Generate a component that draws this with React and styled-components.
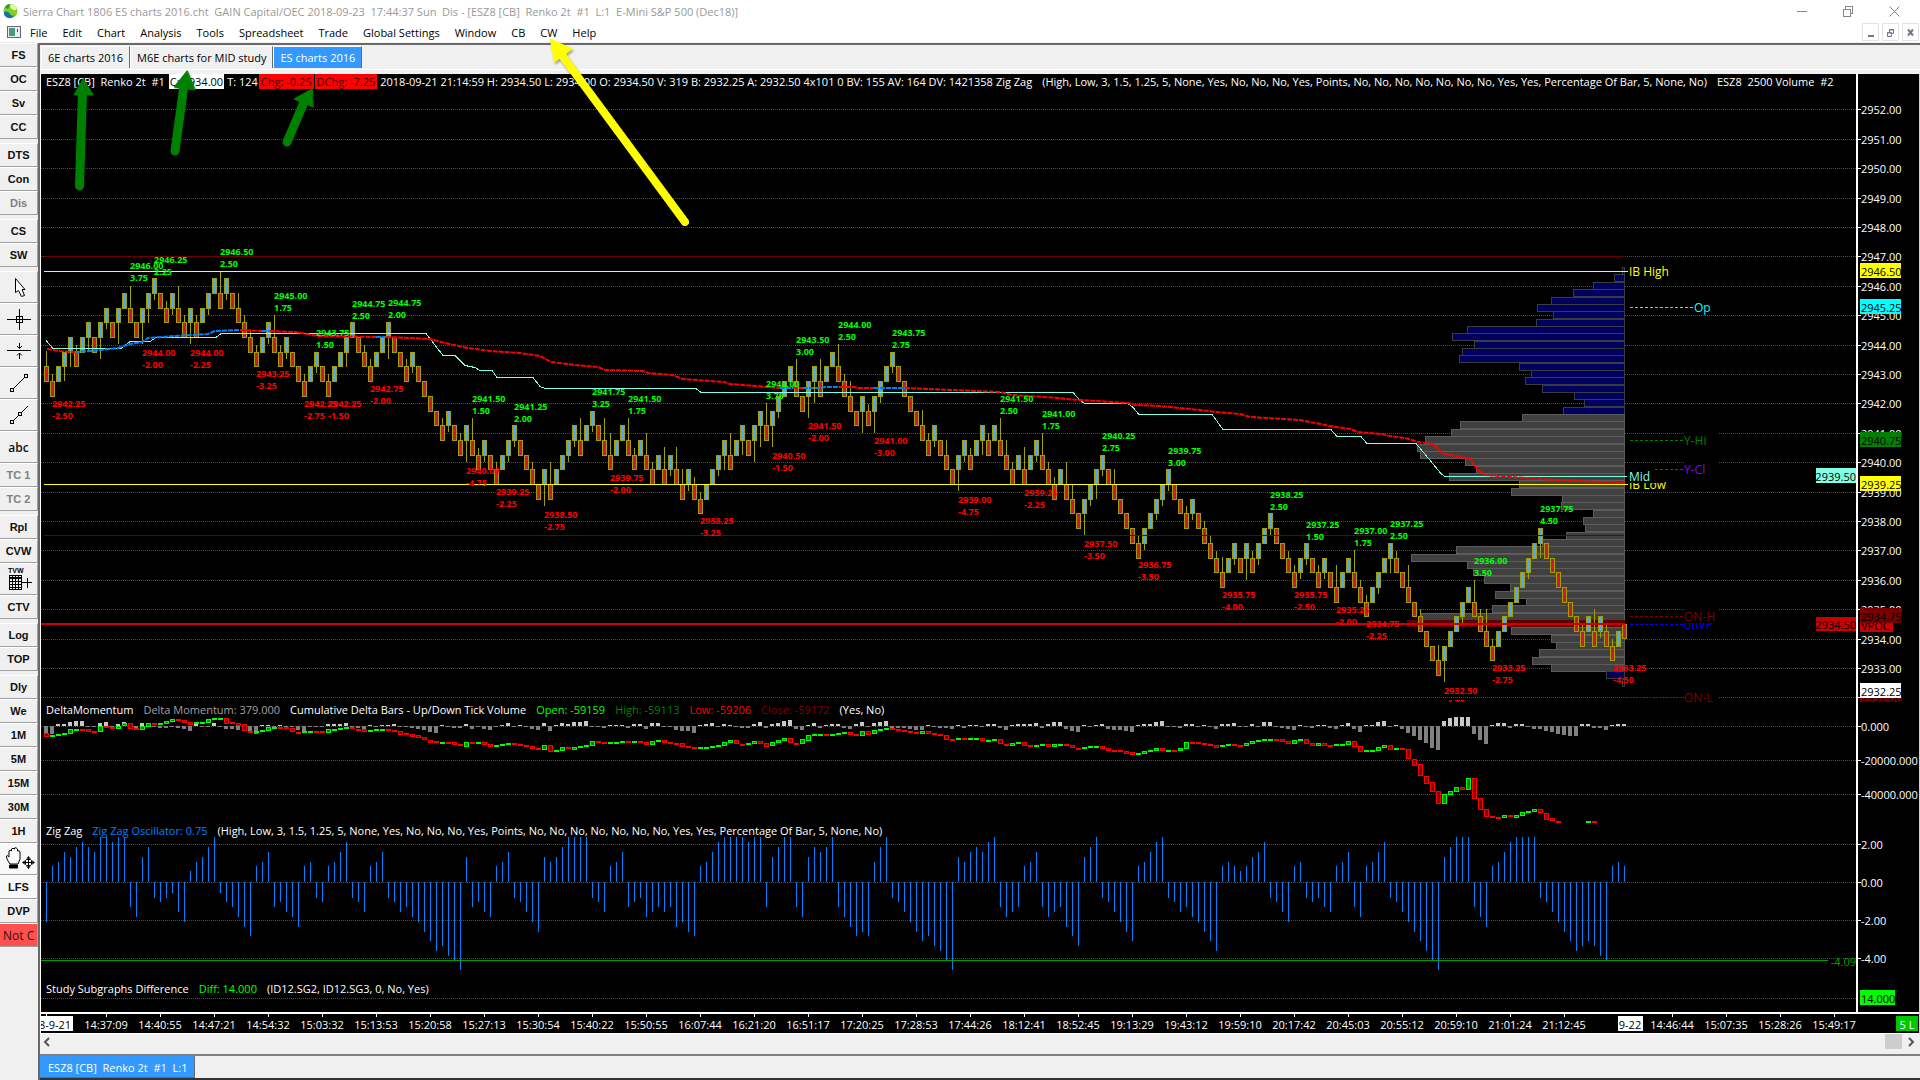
import React, { useState } from "react";
import styled, { createGlobalStyle } from "styled-components";

const GlobalStyle = createGlobalStyle`
  * {
    box-sizing: border-box;
  }
  body {
    margin: 0;
    background: #f0f0f0;
    font-family: "Open Sans", "Noto Sans", sans-serif;
    font-size: 11px;
    overflow: hidden;
  }
  button {
    font-family: inherit;
    font-size: inherit;
    padding: 0;
    margin: 0;
    border: 0;
    background: none;
  }
`;

/* ---------- data ---------- */

// one entry per bar: u = up brick, d = down brick, number = wick length in ticks
const BARS =
  "d2d1u0u2u2d1u0u2d0u3u1d0u3u0d3d0u3u2u1d0d1u1d3d1u3d1u0u1u0d3u1d0d2d1d1d1u0u1d3d1" +
  "u1d0d0d1u0u1d0d1u0u0u2u0d0d1d1u0u0u3d0d0d1u1d0d0d0d0d1u1d0d1u3d3d1u1d0d1u0u1u1d0" +
  "d0d1d0u3d3u0u0u1u1d3u0u1d0d3d3u0u0d3d1u0d3d1u0d3u1d3d2u1d1d1u0u0u1u2d3u0u2d0u3u3" +
  "d3u3u1u0u0d3d0u3u3d3u0u0d3d1d2d0u3d1u3u1u0u1d0d0d0d0d2d1u1d0d2d0u3u1d1u0u2d1u0d3" +
  "d2d1u0d3u0u1d3d1d1u0d3d2d0u3u1u2u1d0d2d0d0d0d1u1u0u1u1u1d0d0d1u1d0d1d1d1d2u0u1d0" +
  "u3d1u1u0u1d0d0d1d1u1u1d0d1u1d0d3u0u0d3d1d1u0u1u0u2d1d0d3d0d1d0d0d2u3u0u0u1u0d3d1" +
  "d3d1u0u0u0u0u0u1u0u2d0d0d0d0d0d0d1u0d3u1d1d1u0d0";

// zig zag oscillator, quarter points
const OSCILLATOR = [
  -8, 3, 4, 6, 5, 7, 8, 7, 6, 9, 9, 8, 9, 9, -5, -7, 5, 7, -3, -4, -3, -2, -6, -8, 2, 4, 5, 7, 9, -2,
  -4, -5, -7, -9, -11, 3, 4, 6, -5, -4, -6, -7, -9, 3, 4, -3, -4, 3, 4, 6, 8, -3, -4, -6, 3, 4, 6, -3,
  -4, -6, -5, -7, -8, -10, -12, -14, -13, -15, -16, -18, 5, -5, -4, -6, -7, 3, 4, 6, -3, -4, -6, -8,
  -10, 5, 4, 5, 7, 9, 9, 9, 9, -3, -4, -6, 3, 4, 6, -5, -4, -3, -7, -6, -5, -6, -5, -9, -8, -10, -11, 3,
  4, 6, 8, 9, 9, 9, 9, 8, 9, 9, -5, 5, 7, 9, 9, -5, -7, 5, 7, 6, 7, 9, -5, -7, -9, -11, -10, -11, 4, 7,
  9, -3, -4, -6, -8, -10, -12, -11, -13, -14, -16, -18, 5, 4, 6, 7, 6, 8, 9, -5, -7, -6, -5, 3, 4, 6,
  -5, -7, -6, -5, -9, -11, -13, 5, 7, 9, -3, -4, -6, -8, -10, -12, 3, 4, 6, 8, 9, -3, -4, -6, -5, -7,
  -8, -10, -12, -14, 3, 4, 3, 2, 3, 5, 6, 8, -3, -4, -6, -8, 3, 4, -3, -4, -3, -5, -6, 3, 4, 6, -5, -7,
  3, 4, 6, 8, -3, -4, -6, -8, -10, -12, -14, -16, -18, 5, 7, 9, 9, 9, -5, -7, -9, 3, 4, 6, 8, 9, 9, 9,
  9, -3, -4, -6, -8, -10, -12, -14, -13, -12, -13, -15, -16, 3, 4, 3,
];

const MOMENTUM = [
  -8, -8, 2, 2, 4, 5, 5, -1, -1, 3, 4, -1, 2, 4, -2, -4, 3, 3, -1, -2, -2, -1, -2, -3, -5, 2, -1, -1, 3,
  -1, -3, -3, -4, -5, -7, -8, 1, 1, -1, 1, -1, -1, -4, -5, -1, -1, -1, 2, 2, 2, 3, -2, -2, -3, 1, -1, 1,
  1, 2, -1, -1, -2, -3, -4, -6, -7, 1, -1, -2, -2, 2, -3, -1, -3, -4, -1, 1, 3, -1, 1, -1, -3, -4, 3,
  -5, 1, 3, 2, 4, 4, 5, -1, -1, -2, 1, 1, 1, -2, 2, 2, -3, 3, 3, -1, -1, -4, -5, -5, -7, 1, 2, 3, -1, 2,
  1, -1, -2, -2, 2, 4, -2, 2, 3, 5, 6, -3, -4, 1, 3, -2, 1, 2, 2, -2, -3, 2, 4, -1, 3, 4, 5, -2, -2, -2,
  -3, -4, -4, 1, -1, -2, -2, -3, 1, -2, 1, 1, -1, 2, 2, -2, -4, 1, 2, 2, 2, 3, -2, 2, 4, 4, -3, -5, -6,
  1, -1, 1, 2, -3, -4, -4, -5, -6, 1, 2, 2, 4, 5, -1, -1, -2, 2, 2, -1, 1, -1, -3, 2, 2, 3, -1, -1, 2,
  -1, 4, 4, -1, -2, -3, -4, 1, -1, -2, 1, 1, -2, -3, 1, 3, -3, -6, 1, 1, 4, 5, -1, 1, -3, -7, -10, -14,
  -17, -22, -24, 5, 8, 9, 9, 9, -8, -14, -18, 1, 3, 3, -2, 2, 2, -1, -3, -3, -5, -6, -8, -9, -10, -10, 2,
  2, -2, -2, -4, 1, 2, 2,
];

// closes of the cumulative delta bars, thirds of a pixel below the top of the scale
const DELTA = [
  112, 109, 105, 102, 90, 89, 91, 97, 98, 82, 84, 85, 80, 73, 88, 92, 82, 73, 74, 73, 67, 61, 63, 69, 74,
  70, 69, 61, 57, 56, 70, 71, 76, 95, 97, 95, 94, 84, 83, 84, 88, 98, 101, 97, 96, 97, 100, 91, 90, 87,
  85, 89, 90, 96, 92, 91, 90, 92, 95, 103, 104, 109, 115, 122, 127, 130, 129, 130, 135, 139, 128, 132,
  130, 135, 140, 137, 135, 132, 136, 139, 142, 148, 152, 139, 157, 154, 145, 149, 143, 140, 138, 127,
  130, 132, 129, 128, 127, 129, 127, 128, 135, 126, 124, 130, 131, 132, 142, 145, 149, 145, 143, 140,
  139, 130, 124, 134, 136, 132, 127, 132, 140, 130, 124, 118, 131, 133, 121, 107, 106, 105, 106, 105,
  102, 99, 106, 107, 96, 104, 94, 91, 87, 91, 93, 95, 98, 101, 96, 101, 104, 107, 119, 122, 118, 122,
  118, 117, 124, 123, 121, 134, 137, 132, 129, 139, 140, 139, 136, 143, 136, 135, 139, 146, 149, 145,
  142, 141, 146, 152, 153, 155, 160, 167, 163, 157, 153, 148, 154, 153, 155, 148, 129, 130, 132, 134,
  137, 143, 139, 136, 137, 139, 133, 126, 124, 121, 120, 121, 127, 134, 124, 121, 133, 139, 132, 139,
  140, 136, 135, 127, 142, 158, 154, 153, 143, 138, 151, 148, 151, 179, 196, 230, 250, 277, 314, 286,
  277, 265, 271, 238, 298, 331, 352, 353, 356, 349, 352, 347, 338, 336, 331, 341, 358, 365, 368,
];

const PROFILE = [
  2, 10, 31, 51, 73, 87, 71, 88, 157, 172, 150, 162, 165, 105, 93, 99, 82, 50, 40, 61, 102, 164, 173, 199,
  207, 204, 159, 148, 175, 105, 113, 62, 63, 31, 41, 39, 58, 82, 168, 213, 157, 151, 140, 114, 129, 98,
  132, 203, 217, 113, 73, 68, 85, 92, 73, 18, 2,
];

const SWINGS = [
  [130, 266, "2946.00", "3.75"], [154, 260, "2946.25", "2.25"], [220, 252, "2946.50", "2.50"],
  [274, 296, "2945.00", "1.75"], [316, 333, "2943.75", "1.50"], [352, 304, "2944.75", "2.50"],
  [388, 303, "2944.75", "2.00"], [472, 399, "2941.50", "1.50"], [514, 407, "2941.25", "2.00"],
  [592, 392, "2941.75", "3.25"], [628, 399, "2941.50", "1.75"], [766, 384, "2942.00", "3.75"],
  [796, 340, "2943.50", "3.00"], [838, 325, "2944.00", "2.50"], [892, 333, "2943.75", "2.75"],
  [1000, 399, "2941.50", "2.50"], [1042, 414, "2941.00", "1.75"], [1102, 436, "2940.25", "2.75"],
  [1168, 451, "2939.75", "3.00"], [1270, 495, "2938.25", "2.50"], [1306, 525, "2937.25", "1.50"],
  [1354, 531, "2937.00", "1.75"], [1390, 524, "2937.25", "2.50"], [1474, 561, "2936.00", "3.50"],
  [1540, 509, "2937.75", "4.50"],
  [52, 404, "2942.25", "-2.50"], [142, 353, "2944.00", "-2.00"], [190, 353, "2944.00", "-2.25"],
  [256, 374, "2943.25", "-3.25"], [304, 404, "2942.25", "-2.75"], [328, 404, "2942.25", "-1.50"],
  [370, 389, "2942.75", "-2.00"], [466, 471, "2940.00", "-4.75"], [496, 492, "2939.25", "-2.25"],
  [544, 515, "2938.50", "-2.75"], [610, 478, "2939.75", "-2.00"], [700, 521, "2938.25", "-3.25"],
  [772, 456, "2940.50", "-1.50"], [808, 426, "2941.50", "-2.00"], [874, 441, "2941.00", "-3.00"],
  [958, 500, "2939.00", "-4.75"], [1024, 493, "2939.25", "-2.25"], [1084, 544, "2937.50", "-3.50"],
  [1138, 565, "2936.75", "-3.50"], [1222, 595, "2935.75", "-4.00"], [1294, 595, "2935.75", "-2.50"],
  [1336, 610, "2935.25", "-2.00"], [1366, 624, "2934.75", "-2.25"], [1444, 691, "2932.50", "-4.75"],
  [1492, 668, "2933.25", "-2.75"], [1613, 668, "2933.25", "-4.50"],
];

const MID_LINE =
  "46,340 53,348 121,348 130,341 150,341 156,337 216,337 221,333 426,333 443,355 455,355 465,365 475,367 480,370 492,370 497,377 533,377 540,386 545,388 696,388 701,392 1073,392 1080,400 1085,403 1128,403 1133,407 1139,414 1212,414 1223,429 1331,429 1337,436 1361,436 1367,443 1416,443 1441,473 1445,476 1627,476";

const AVERAGE = [
  ["#f00", "47,349 60,351 75,352"],
  ["#0080ff", "75,352 92,351 118,348 130,344 142,342 148,338 175,336 208,334 215,331 240,330"],
  ["#f00", "240,330 262,331"],
  ["#0080ff", "262,331 270,331"],
  ["#f00", "270,331 295,332 318,336 376,337"],
  ["#0080ff", "376,337 386,337"],
  ["#f00", "386,337 430,339 445,343 468,348 490,351 520,353 540,356 551,362 575,365 598,367 605,370 643,371 648,373 672,375 683,379 724,382 730,384 766,387 780,388"],
  ["#0080ff", "780,388 793,388"],
  ["#f00", "793,388 803,388"],
  ["#0080ff", "803,388 820,388 825,387 840,387"],
  ["#f00", "840,387 854,387 858,388 874,388"],
  ["#0080ff", "874,388 905,388"],
  ["#f00", "905,388 927,389 950,390 1000,392 1012,395 1060,398 1065,399 1128,403 1135,405 1160,406 1200,410 1217,412 1240,414 1250,417 1300,420 1330,426 1350,429 1358,432 1382,434 1390,436 1405,438 1418,442 1433,444 1442,453 1460,457 1470,459 1478,470 1485,475 1540,479 1580,481 1625,483"],
];

const TIMES = [
  "14:37:09", "14:40:55", "14:47:21", "14:54:32", "15:03:32", "15:13:53", "15:20:58", "15:27:13",
  "15:30:54", "15:40:22", "15:50:55", "16:07:44", "16:21:20", "16:51:17", "17:20:25", "17:28:53",
  "17:44:26", "18:12:41", "18:52:45", "19:13:29", "19:43:12", "19:59:10", "20:17:42", "20:45:03",
  "20:55:12", "20:59:10", "21:01:24", "21:12:45", "", "14:46:44", "15:07:35", "15:28:26", "15:49:17",
];

const MENUS = ["File", "Edit", "Chart", "Analysis", "Tools", "Spreadsheet", "Trade", "Global Settings", "Window", "CB", "CW", "Help"];
const BOOKS = ["6E charts 2016", "M6E charts for MID study", "ES charts 2016"];

const TOOL_GROUPS = [
  ["FS", "OC", "Sv", "CC"],
  ["DTS", "Con", "Dis"],
  ["CS", "SW"],
  ["pointer", "crosshair", "measure", "line", "ray", "abc", "TC 1", "TC 2"],
  ["Rpl", "CVW", "tvw", "CTV"],
  ["Log", "TOP"],
  ["Dly", "We", "1M", "5M", "15M", "30M", "1H", "hand", "LFS", "DVP", "Not C"],
];

const priceY = (p) => Math.round(256.4 + (2947 - p) * 29.4);
const barX = (i) => 44 + i * 6;

/* ---------- window frame ---------- */

const Window = styled.div`
  position: relative;
  display: flex;
  flex-direction: column;
  min-height: 100vh;
  background: #f0f0f0;
`;
const TitleBar = styled.header`
  display: flex;
  align-items: center;
  height: 22px;
  padding: 0 19px 0 3px;
  gap: 5px;
  background: #fff;
  color: #999;
`;
const Title = styled.h1`
  flex: 1;
  margin: 0;
  font-size: 11px;
  font-weight: 400;
  white-space: pre;
`;
const WindowButtons = styled.div`
  display: flex;
  gap: 33px;
`;
const WindowButton = styled.button`
  display: flex;
  width: 13px;
  height: 13px;
`;
const MenuBar = styled.nav`
  display: flex;
  align-items: center;
  height: 20px;
  padding: 0 1px 0 7px;
  background: #fff;
`;
const Menus = styled.div`
  display: flex;
  flex: 1;
  gap: 15px;
  padding-left: 9px;
`;
const MenuButton = styled.button`
  line-height: 18px;
  padding-top: 2px;
  color: #000;
`;
const ChildButtons = styled.div`
  display: flex;
  gap: 3px;
`;
const ChildButton = styled.button`
  display: flex;
  align-items: center;
  justify-content: center;
  width: 17px;
  height: 18px;
  border: 1px solid #e3e3e3;
  background: #fff;
`;
const Body = styled.div`
  display: flex;
  flex: 1;
  padding-top: 1px;
`;

/* ---------- left toolbar ---------- */

const Toolbar = styled.aside`
  display: flex;
  flex-direction: column;
  gap: 4px;
  width: 38px;
  flex: none;
`;
const ToolGroup = styled.div`
  display: flex;
  flex-direction: column;
`;
const ToolButton = styled.button`
  display: flex;
  align-items: center;
  justify-content: ${(props) => (props.$alert ? "flex-start" : "center")};
  height: ${(props) => (props.$tall ? "32px" : "24px")};
  border-top: 1px solid #fff;
  border-bottom: 1px solid #a0a0a0;
  border-right: 1px solid #a0a0a0;
  background: ${(props) => (props.$alert ? "#ff5050" : props.$pressed ? "#f8f8f8" : "#f0f0f0")};
  color: ${(props) => (props.$dim ? "#808080" : props.$alert ? "#301010" : "#111")};
  font-family: ${(props) => (props.$alert || props.$plain ? "inherit" : '"Liberation Sans", sans-serif')};
  font-weight: ${(props) => (props.$alert ? 400 : props.$plain ? 600 : 700)};
  font-size: ${(props) => (props.$plain || props.$alert ? "12px" : "11px")};
  padding-left: ${(props) => (props.$alert ? "3px" : "0")};
  white-space: nowrap;
  overflow: hidden;
`;

/* ---------- chart area ---------- */

const Main = styled.main`
  display: flex;
  flex-direction: column;
  flex: 1;
  min-width: 0;
  border-top: 2px solid #696969;
  border-left: 2px solid #696969;
`;
const TabStrip = styled.div`
  display: flex;
  align-items: stretch;
  flex: none;
  height: 25px;
  padding: 1px 0 1px 1px;
  border-bottom: 1px solid #fff;
`;
const Tab = styled.button`
  padding: 0 6px;
  color: ${(props) => (props.$active ? "#fff" : "#000")};
  background: ${(props) => (props.$active ? "#3399ff" : "#f0f0f0")};
  border-left: 1px solid #fff;
  border-top: 1px solid #fff;
  border-right: 1px solid #696969;
  white-space: pre;
`;
const Chart = styled.section`
  display: flex;
  flex-direction: column;
  flex: none;
  margin-top: 4px;
  background: #000;
  border-left: 1px solid #fff;
  border-right: 1px solid #d0d0d0;
`;
const Region = styled.div`
  position: relative;
  display: grid;
  grid-template-columns: minmax(0, 1fr) 63px;
  height: ${(props) => props.$height};
`;
const Drawing = styled.svg`
  display: block;
  width: 100%;
  height: 100%;
  overflow: hidden;
  font-size: 11px;
`;
const Scale = styled(Drawing)`
  border-left: 2px solid #fff;
`;
const StudyLine = styled.div`
  position: absolute;
  top: 0;
  left: 5px;
  right: 64px;
  display: flex;
  height: 15px;
  overflow: hidden;
  white-space: pre;
  line-height: 15px;
  color: #fff;
`;
const Study = styled.span`
  flex: none;
  margin-right: ${(props) => props.$gap || "10px"};
  color: ${(props) => props.$color || "#fff"};
`;
const Quote = styled(Study)`
  margin-right: ${(props) => props.$gap || "1px"};
  padding: 0 ${(props) => props.$pad || "2px"};
  background: ${(props) => props.$fill};
`;
const TimeAxis = styled.div`
  height: 21px;
  border-top: 2px solid #fff;
`;
const ScrollBar = styled.div`
  display: flex;
  flex: none;
  justify-content: space-between;
  align-items: center;
  height: 16px;
  padding: 0 3px;
  border-top: 1px solid #fff;
`;
const ScrollEnd = styled.div`
  display: flex;
  gap: 5px;
  height: 15px;
`;
const ScrollButton = styled.button`
  display: flex;
  align-items: center;
  width: 10px;
  height: 15px;
`;
const Thumb = styled.div`
  width: 17px;
  background: #cdcdcd;
`;
const ChartTabs = styled.div`
  display: flex;
  align-items: flex-start;
  flex: 1;
  margin-top: 5px;
  border-top: 2px solid #808080;
  border-bottom: 2px solid #333;
`;
const ChartTab = styled(Tab)`
  height: 22px;
  padding: 0 7px;
  border-top-color: #3399ff;
  border-left-color: #3399ff;
  border-bottom: 1px solid #696969;
`;
const Notes = styled.svg`
  position: absolute;
  top: 0;
  left: 0;
  width: 700px;
  height: 240px;
  pointer-events: none;
  filter: drop-shadow(1px 2px 1px rgba(0, 0, 0, 0.35));
`;

/* ---------- icons ---------- */

const ICONS = {
  pointer: (
    <svg width="28" height="28" fill="#fff" stroke="#000">
      <path d="M10.500 5.500v14l3-2l3 6l3-1l-2.500-6h3z" />
    </svg>
  ),
  crosshair: (
    <svg width="26" height="26" fill="none" stroke="#000" shapeRendering="crispEdges">
      <path d="M1 13.500h24M13.500 3v21" />
      <rect x="10.500" y="10.500" width="6" height="6" />
    </svg>
  ),
  measure: (
    <svg width="26" height="26" fill="none" stroke="#000">
      <path d="M1 12.500h24M13.500 5v5M11 8l2.500 2.500L16 8M13.500 21v-6M11 17.500l2.500-2.500l2.500 2.500" />
    </svg>
  ),
  line: (
    <svg width="26" height="26" fill="#f0f0f0" stroke="#000">
      <path d="M6 20L20 6" />
      <rect x="4.500" y="18.500" width="3" height="3" />
      <rect x="18.500" y="4.500" width="3" height="3" />
    </svg>
  ),
  ray: (
    <svg width="26" height="26" fill="#f0f0f0" stroke="#000">
      <path d="M6 20L22 4" />
      <rect x="4.500" y="18.500" width="3" height="3" />
      <rect x="12.500" y="10.500" width="3" height="3" />
    </svg>
  ),
  tvw: (
    <svg width="28" height="28" fill="none" stroke="#000" shapeRendering="crispEdges">
      <text x="3" y="8" fontSize="7" fill="#000" stroke="none">TVW</text>
      <path d="M4 10.500h12v14h-12zM4 13.500h12M4 16.500h12M4 19.500h12M4 22.500h12" />
      <path d="M4 12h12M7.500 10v15M10.500 10v15M13.500 10v15M17 17.500h10M22.500 13v10" />
    </svg>
  ),
  hand: (
    <svg width="32" height="28" fill="#fff" stroke="#000">
      <path d="M7 19c-2-3-3.500-5-3.500-8c1-1 2 0 2.500 1v-6q1-1.500 2.500 0v-2q1.500-1.500 3 0v-1q1.500-1 3 1v2q2-1 2.500 1v7l-2 5z" />
      <path d="M6.500 20h8v3h-8z" fill="#000" />
      <path d="M25.500 12v12M20 17.500h11M25.500 11.500l-2 3h4zM25.500 23.500l-2-3h4zM19.500 17.500l3-2v4zM31.500 17.500l-3-2v4z" />
    </svg>
  ),
};

const Globe = () => (
  <svg width="15" height="16" viewBox="0 0 15 16">
    <circle cx="7.500" cy="8" r="7" fill="#7ed321" />
    <path d="M8 1a7 7 0 0 1 6 5c-2 2-4 1-5 0s-3-1-1-5z" fill="#dff5a8" />
    <path d="M1 9c3-1 5 0 6 2s3 2 5 1c-2 3-5 4-8 2.500S1 11 1 9z" fill="#1a6fb0" />
    <path d="M2 4c1-2 3-3 5-3c-1 2 0 3-1 4s-3 1-4-1z" fill="#2f9a3c" />
  </svg>
);

const ChildIcon = () => (
  <svg width="14" height="12" viewBox="0 0 14 12" shapeRendering="crispEdges">
    <rect x="0.500" y="0.500" width="13" height="11" fill="#e8eef2" stroke="#667" />
    <rect x="2" y="2" width="6" height="8" fill="#4a9a78" />
    <path d="M10.500 3v3" stroke="#446" />
  </svg>
);

/* ---------- chart pieces ---------- */

const Grid = ({ rows }) =>
  rows.map((y) => (
    <line key={y} x1="0" x2="100%" y1={y + 0.5} y2={y + 0.5} stroke="#484848" strokeDasharray="1 1" shapeRendering="crispEdges" />
  ));

const Ticks = ({ items }) =>
  items.map(([y, label]) => (
    <g key={label} fill="#fff">
      <rect x="0" y={y} width="3" height="1" />
      <text x="3" y={y} dominantBaseline="central">{label}</text>
    </g>
  ));

const Badge = ({ y, fill, color = "#000", width = 41, children }) => (
  <g>
    <rect x="2" y={y - 8} width={width} height="15" fill={fill} />
    <text x="3" y={y} fill={color} dominantBaseline="central">{children}</text>
  </g>
);

const Bricks = () => {
  let level = 5;
  return BARS.match(/[ud]\d/g).map((bar, i, all) => {
    const up = bar[0] === "u";
    const wick = Number(bar[1]) * 7.35;
    level += up ? -1 : 1;
    const k = i === all.length - 1 ? 23.5 : level;
    const top = Math.round(278.2 + k * 14.7);
    const bottom = Math.round(278.2 + (k + 1) * 14.7);
    const x = barX(i);
    return (
      <g key={i}>
        {wick > 0 && <rect x={x + 2} y={up ? bottom : top - wick} width="1" height={wick} fill="#a0a000" />}
        <rect x={x + 0.5} y={top + 0.5} width="4" height={bottom - top} fill={up ? "#4da6ff" : "#d0143c"} stroke="#a0a000" />
      </g>
    );
  });
};

const Profile = () =>
  PROFILE.map((width, i) => {
    const y = priceY(2946.5 - i * 0.25) - 3.5;
    const value = i < 20 || i > 54;
    const poc = i === 48;
    return (
      <rect
        key={i}
        x={1624.5 - width}
        y={y}
        width={width}
        height={poc ? 6 : 7}
        fill={poc ? "#600000" : value ? "#000060" : "#404040"}
        stroke={poc ? "#600000" : value ? "#3c3c3c" : "#5c5c5c"}
      />
    );
  });

const LevelTag = ({ x, y, from, color, children }) => (
  <g>
    <rect x={x} y={y - 7} width="34" height="14" fill="#000" />
    {from && <line x1={from} x2={x} y1={y + 0.5} y2={y + 0.5} stroke={color} strokeDasharray="3 2" shapeRendering="crispEdges" />}
    <text x={x} y={y} fill={color} fontSize="12" dominantBaseline="central">{children}</text>
  </g>
);

const PriceRegion = () => {
  const prices = Array.from({ length: 21 }, (_, i) => 2952 - i);
  return (
    <Region $height="628px">
      <Drawing>
        <g transform="translate(-41 -74)">
          <svg x="41" width="100%" height="720" overflow="visible">
            <Grid rows={prices.map(priceY)} />
          </svg>
          <g shapeRendering="crispEdges">
            <Profile />
            <Bricks />
            <path d="M44 256.500H1624M44 535.500H1624" stroke="#700000" />
            <path d="M44 271.500H1628M44 484.500H1628" stroke="#ff0" />
            <path d="M41 624H1625" stroke="#d00000" strokeWidth="2" />
          </g>
          <polyline points={MID_LINE} transform="translate(0 0.500)" fill="none" stroke="#80ffe6" shapeRendering="crispEdges" />
          {AVERAGE.map(([color, points]) => (
            <polyline key={points} points={points} fill="none" stroke={color} strokeWidth="2" strokeDasharray="5 1" />
          ))}
          {SWINGS.map(([x, y, price, move]) => (
            <g key={x + price} fill={move[0] === "-" ? "#f00" : "#0f0"} fontSize="9" fontWeight="700">
              <text x={x} y={y + 3}>{price}</text>
              <text x={x} y={y + 15}>{move}</text>
            </g>
          ))}
          <LevelTag x={1629} y={484} color="#ff0">IB Low</LevelTag>
          <LevelTag x={1629} y={476} color="#80ffe6">Mid</LevelTag>
          <LevelTag x={1629} y={271} color="#ff0">IB High</LevelTag>
          <LevelTag x={1694} y={307} from={1630} color="#00ffff">Op</LevelTag>
          <LevelTag x={1684} y={440} from={1630} color="#008000">Y-Hi</LevelTag>
          <LevelTag x={1684} y={469} from={1655} color="#8000ff">Y-Cl</LevelTag>
          <LevelTag x={1684} y={624} from={1630} color="#0000ff">onVP</LevelTag>
          <LevelTag x={1684} y={616} from={1630} color="#800000">ON-H</LevelTag>
          <LevelTag x={1684} y={697} from={1624} color="#800000">ON-L</LevelTag>
        </g>
        <svg x="100%" overflow="visible">
          <rect x="-40" y="394" width="40" height="15" fill="#80ffe6" />
          <text x="0" y="402" textAnchor="end" dominantBaseline="central">2939.50</text>
          <rect x="-40" y="543" width="40" height="14" fill="#c80000" />
          <text x="0" y="550" textAnchor="end" dominantBaseline="central">2934.50</text>
        </svg>
      </Drawing>
      <Scale>
        <g transform="translate(0 -74)">
          <Ticks items={prices.map((p) => [priceY(p), p.toFixed(2)])} />
          <Badge y={271} fill="#ff0">2946.50</Badge>
          <Badge y={307} fill="#0ff">2945.25</Badge>
          <Badge y={440} fill="#008000">2940.75</Badge>
          <Badge y={484} fill="#ff0">2939.25</Badge>
          <Badge y={625} fill="#c80000" width={33}>VPOC</Badge>
          <Badge y={616} fill="#780000">2934.75</Badge>
          <Badge y={697} fill="#780000">2932.00</Badge>
          <Badge y={691} fill="#fff">2932.25</Badge>
        </g>
      </Scale>
      <StudyLine>
        <Study $gap="4px">{"ESZ8 [CB]  Renko 2t  #1"}</Study>
        <Quote $fill="#fff" $color="#000" $gap="3px" $pad="1px">C: 2934.00</Quote>
        <Study $gap="1px">T: 124</Study>
        <Quote $fill="#f00" $color="#400000">Chg: -0.25</Quote>
        <Quote $fill="#f00" $color="#400000" $gap="3px">DChg: -7.25</Quote>
        <Study $gap="3px">2018-09-21 21:14:59 H: 2934.50 L: 2934.00 O: 2934.50 V: 319 B: 2932.25 A: 2932.50 4x101 0 BV: 155 AV: 164 DV: 1421358</Study>
        <Study>Zig Zag</Study>
        <Study>(High, Low, 3, 1.5, 1.25, 5, None, Yes, No, No, No, Yes, Points, No, No, No, No, No, No, No, Yes, Yes, Percentage Of Bar, 5, None, No)</Study>
        <Study>{"ESZ8  2500 Volume  #2"}</Study>
      </StudyLine>
    </Region>
  );
};

const DeltaRegion = () => {
  const bar = (i, open, close) => {
    const up = close <= open;
    const top = Math.round(700 + Math.min(open, close) / 3);
    const height = Math.max(1, Math.round(Math.abs(open - close) / 3));
    return (
      <rect
        key={"d" + i}
        x={barX(i) + 0.5}
        y={top - 0.5}
        width="4"
        height={height}
        fill={up ? "#008000" : "#800000"}
        stroke={up ? "#0f0" : "#f00"}
      />
    );
  };
  return (
    <Region $height="121px">
      <Drawing>
        <g transform="translate(-41 -702)">
          <svg x="41" width="100%" height="840" overflow="visible">
            <Grid rows={[726, 760, 794]} />
          </svg>
          <g shapeRendering="crispEdges">
            {MOMENTUM.map((m, i) => (
              <rect
                key={i}
                x={barX(i)}
                y={m > 0 ? 726 - m : 726}
                width="4"
                height={Math.abs(m)}
                fill={m > 0 ? "#c8c8c8" : "#808080"}
              />
            ))}
            {DELTA.map((close, i) => bar(i, i ? DELTA[i - 1] : 102, close))}
            {bar(257, 367, 366)}
            {bar(258, 366, 367)}
          </g>
        </g>
      </Drawing>
      <Scale>
        <g transform="translate(0 -702)">
          <Ticks items={[[726, "0.000"], [760, "-20000.000"], [794, "-40000.000"]]} />
        </g>
      </Scale>
      <StudyLine>
        <Study>DeltaMomentum</Study>
        <Study $color="#a0a0a0">Delta Momentum: 379.000</Study>
        <Study>Cumulative Delta Bars - Up/Down Tick Volume</Study>
        <Study $color="#0f0">Open: -59159</Study>
        <Study $color="#008000">High: -59113</Study>
        <Study $color="#f00">Low: -59206</Study>
        <Study $color="#800000">Close: -59172</Study>
        <Study>(Yes, No)</Study>
      </StudyLine>
    </Region>
  );
};

const OscillatorRegion = () => (
  <Region $height="158px">
    <Drawing>
      <g transform="translate(-41 -823)">
        <svg x="41" width="100%" height="1000" overflow="visible">
          <Grid rows={[844, 882, 920, 958]} />
        </svg>
        <g shapeRendering="crispEdges">
          {OSCILLATOR.map((q, i) => {
            const length = Math.round(Math.abs(q) * 4.85) + 1;
            return <rect key={i} x={barX(i) + 2} y={q > 0 ? 882 - length : 882} width="1" height={length} fill="#0080ff" />;
          })}
        </g>
      </g>
      <rect x="-28" y="137" width="100%" height="1" fill="#00a000" />
      <text x="100%" y="138" fill="#00a000" textAnchor="end" dominantBaseline="central">-4.09</text>
    </Drawing>
    <Scale>
      <g transform="translate(0 -823)">
        <Ticks items={[[844, "2.00"], [882, "0.00"], [920, "-2.00"], [958, "-4.00"]]} />
      </g>
    </Scale>
    <StudyLine>
      <Study>Zig Zag</Study>
      <Study $color="#0080ff">Zig Zag Oscillator: 0.75</Study>
      <Study>(High, Low, 3, 1.5, 1.25, 5, None, Yes, No, No, No, Yes, Points, No, No, No, No, No, No, No, Yes, Yes, Percentage Of Bar, 5, None, No)</Study>
    </StudyLine>
  </Region>
);

const DifferenceRegion = () => (
  <Region $height="31px">
    <Drawing>
      <Grid rows={[17]} />
    </Drawing>
    <Scale>
      <Badge y={17} fill="#0f0" width={35}>14.000</Badge>
    </Scale>
    <StudyLine>
      <Study>Study Subgraphs Difference</Study>
      <Study $color="#0f0">Diff: 14.000</Study>
      <Study>(ID12.SG2, ID12.SG3, 0, No, Yes)</Study>
    </StudyLine>
  </Region>
);

const TimeLabels = () => (
  <TimeAxis>
    <Drawing>
      <g fill="#fff" textAnchor="middle">
        {TIMES.map((time, i) =>
          time ? (
            <g key={i}>
              <rect x={65 + i * 54} y="0" width="1" height="3" />
              <text x={65 + i * 54} y="10" dominantBaseline="central">{time}</text>
            </g>
          ) : null
        )}
        <rect x="5" y="0" width="1" height="3" />
        <rect x="0" y="2" width="32" height="15" />
        <rect x="1577" y="2" width="25" height="15" />
        <text x="14" y="10" fill="#000" dominantBaseline="central">8-9-21</text>
        <text x="1589" y="10" fill="#000" dominantBaseline="central">9-22</text>
      </g>
      <svg x="100%" overflow="visible">
        <rect x="-23" y="2" width="22" height="15" fill="#00c800" />
        <text x="-12" y="10" fill="#fff" textAnchor="middle" dominantBaseline="central">5 L</text>
      </svg>
    </Drawing>
  </TimeAxis>
);

const App = () => {
  const [book, setBook] = useState(2);

  return (
    <Window>
      <GlobalStyle />
      <TitleBar>
        <Globe />
        <Title>{"Sierra Chart 1806 ES charts 2016.cht  GAIN Capital/OEC 2018-09-23  17:44:37 Sun  Dis - [ESZ8 [CB]  Renko 2t  #1  L:1  E-Mini S&P 500 (Dec18)]"}</Title>
        <WindowButtons>
          <WindowButton aria-label="Minimize">
            <svg width="13" height="13" stroke="#888"><path d="M1 6.500h10" /></svg>
          </WindowButton>
          <WindowButton aria-label="Restore">
            <svg width="13" height="13" fill="none" stroke="#888" shapeRendering="crispEdges"><path d="M1.500 4.500h7v7h-7zM3.500 4v-2.500h7v7h-2" /></svg>
          </WindowButton>
          <WindowButton aria-label="Close">
            <svg width="13" height="13" stroke="#888"><path d="M1.500 1.500l10 10M11.500 1.500l-10 10" /></svg>
          </WindowButton>
        </WindowButtons>
      </TitleBar>
      <MenuBar>
        <ChildIcon />
        <Menus>
          {MENUS.map((menu) => (
            <MenuButton key={menu}>{menu}</MenuButton>
          ))}
        </Menus>
        <ChildButtons>
          <ChildButton aria-label="Minimize chartbook">
            <svg width="9" height="9" stroke="#6a7a90" strokeWidth="2"><path d="M2 8h6" /></svg>
          </ChildButton>
          <ChildButton aria-label="Restore chartbook">
            <svg width="9" height="9" fill="none" stroke="#6a7a90"><path d="M1.500 4.500h4v4h-4zM3.500 4v-2.500h4v4h-2M3 2h5M1 5h5" /></svg>
          </ChildButton>
          <ChildButton aria-label="Close chartbook">
            <svg width="9" height="9" stroke="#6a7a90" strokeWidth="2"><path d="M2 1.500l5 6M7 1.500l-5 6" /></svg>
          </ChildButton>
        </ChildButtons>
      </MenuBar>
      <Body>
        <Toolbar>
          {TOOL_GROUPS.map((group) => (
            <ToolGroup key={group[0]}>
              {group.map((tool) => (
                <ToolButton
                  key={tool}
                  aria-label={tool}
                  $tall={Boolean(ICONS[tool]) || tool === "abc"}
                  $plain={tool === "abc"}
                  $dim={["Dis", "TC 1", "TC 2"].includes(tool)}
                  $pressed={tool === "hand" || tool === "LFS"}
                  $alert={tool === "Not C"}
                >
                  {ICONS[tool] || tool}
                </ToolButton>
              ))}
            </ToolGroup>
          ))}
        </Toolbar>
        <Main>
          <TabStrip>
            {BOOKS.map((name, i) => (
              <Tab key={name} $active={i === book} onClick={() => setBook(i)}>
                {name}
              </Tab>
            ))}
          </TabStrip>
          <Chart>
            <PriceRegion />
            <DeltaRegion />
            <OscillatorRegion />
            <DifferenceRegion />
            <TimeLabels />
          </Chart>
          <ScrollBar>
            <ScrollButton aria-label="Scroll left">
              <svg width="8" height="10" fill="none" stroke="#555" strokeWidth="2"><path d="M6 1L2 5l4 4" /></svg>
            </ScrollButton>
            <ScrollEnd>
              <Thumb />
              <ScrollButton aria-label="Scroll right">
                <svg width="8" height="10" fill="none" stroke="#555" strokeWidth="2"><path d="M2 1l4 4l-4 4" /></svg>
              </ScrollButton>
            </ScrollEnd>
          </ScrollBar>
          <ChartTabs>
            <ChartTab $active>{"ESZ8 [CB]  Renko 2t  #1  L:1"}</ChartTab>
          </ChartTabs>
        </Main>
      </Body>
      <Notes>
        <g fill="#008000" stroke="#008000" strokeLinecap="round">
          <path d="M79.500 186L82.500 92" strokeWidth="9" />
          <path d="M83 79L74 95L93 95z" strokeWidth="1" />
          <path d="M175 151L184 85" strokeWidth="9" />
          <path d="M187 71L174 87L195 90z" strokeWidth="1" />
          <path d="M287 142L305 100" strokeWidth="9" />
          <path d="M312 89L294 99L313 107z" strokeWidth="1" />
        </g>
        <g fill="#ff0" stroke="#ff0" strokeLinecap="round">
          <path d="M685 222L561 54" strokeWidth="8" />
          <path d="M551 40L555 61L571 49z" strokeWidth="2" />
        </g>
      </Notes>
    </Window>
  );
};

export default App;
